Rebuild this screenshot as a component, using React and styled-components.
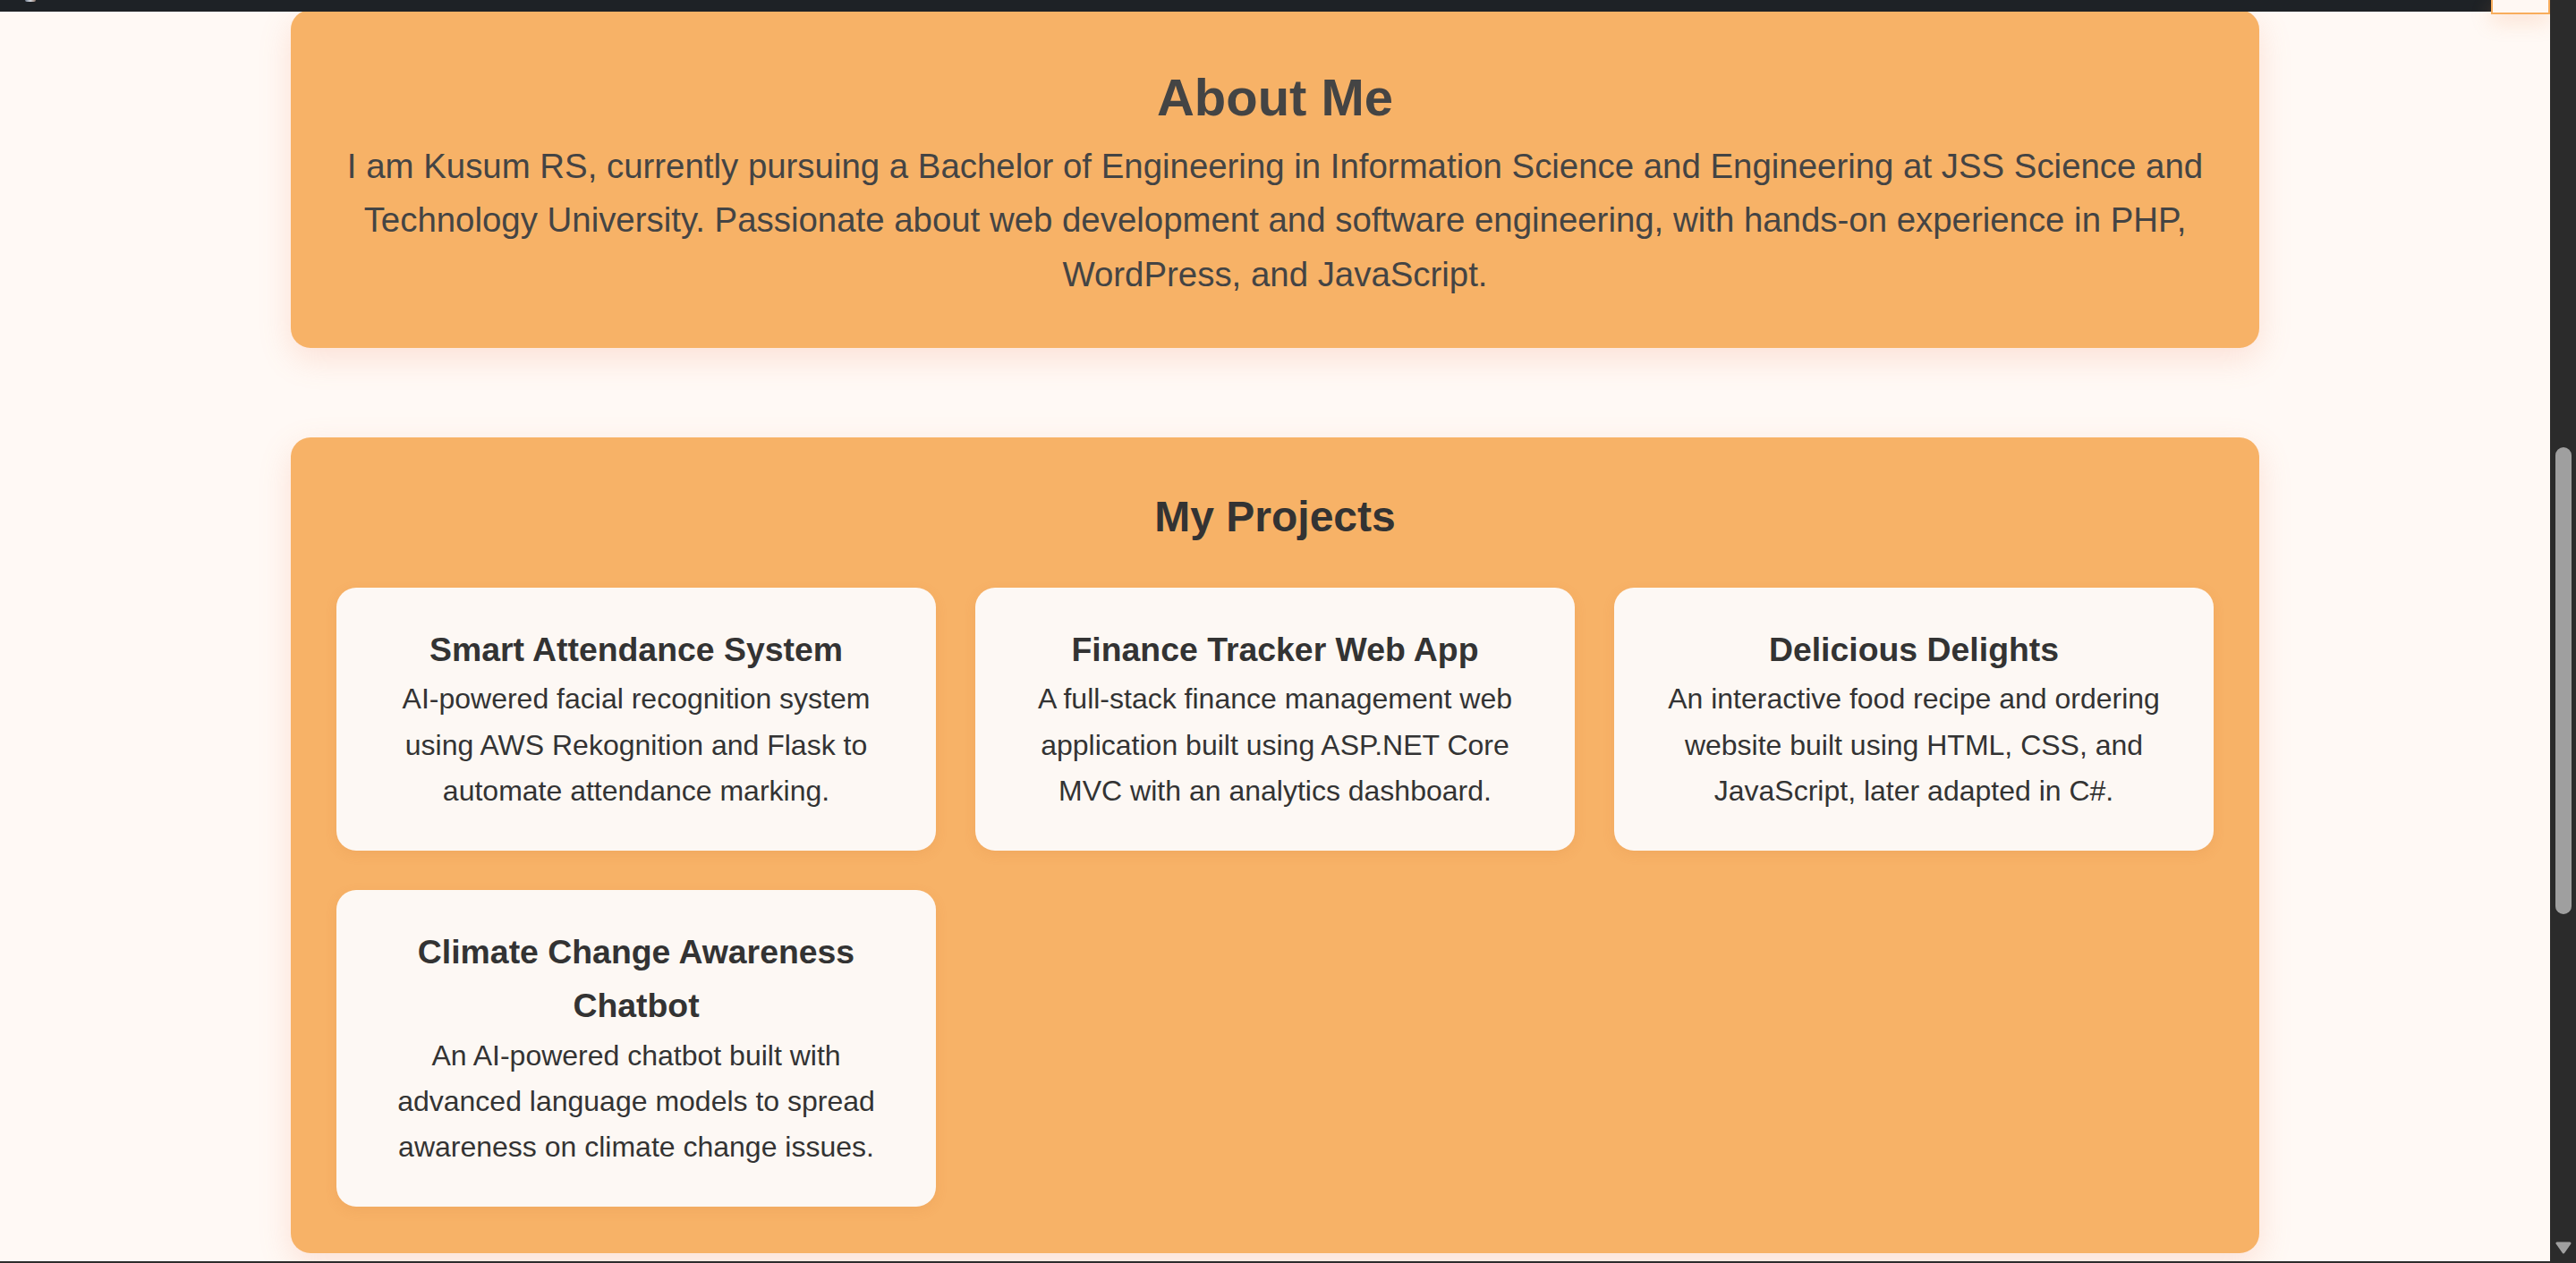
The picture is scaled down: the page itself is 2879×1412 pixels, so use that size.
import React from 'react'
import styled, { createGlobalStyle } from 'styled-components'

const GlobalStyle = createGlobalStyle`
  *, *::before, *::after {
    box-sizing: border-box;
  }
  html, body {
    margin: 0;
    padding: 0;
    overflow: hidden;
  }
  body {
    font-family: "Liberation Sans", Arial, Helvetica, sans-serif;
    background: #fff9f5;
  }
`

const Frame = styled.div`
  display: flex;
  width: 100vw;
  height: 100vh;
`

const Page = styled.main`
  position: relative;
  flex: 1;
  overflow: hidden;
  background: #fff9f5;
  border-bottom: 2px solid #2c2c2c;
`

const TopBar = styled.nav`
  position: absolute;
  top: 0;
  left: 0;
  right: 0;
  z-index: 5;
  height: 13px;
  display: flex;
  align-items: flex-start;
  padding-left: 28px;
  background: #1e2226;
`

const LogoTip = styled.span`
  width: 12px;
  height: 2px;
  border-radius: 0 0 4px 4px;
  background: linear-gradient(90deg, #6d7a8c, #d4d8de 50%, #8a6f62);
`

const MenuEdge = styled.div`
  position: absolute;
  top: 0;
  right: 0;
  z-index: 6;
  width: 66px;
  height: 16px;
  background: #fff8f3;
  border: 2px solid #f8ad5c;
  border-top: none;
  box-shadow: 0 8px 22px rgba(245, 150, 90, 0.25);
`

const Content = styled.div`
  display: flex;
  flex-direction: column;
  align-items: center;
  gap: 100px;
  padding-top: 11px;
`

const Section = styled.section`
  width: 2200px;
  background: #f7b267;
  border-radius: 22px;
  box-shadow: 0 12px 36px rgba(240, 130, 90, 0.2);
  padding: ${props => props.$top || 51}px 51px ${props => props.$bottom || 51}px;
  text-align: center;
  color: ${props => props.$ink || '#333'};
`

const AboutTitle = styled.h2`
  margin: 0;
  font-size: 58px;
  line-height: 1.6;
  font-weight: 700;
`

const AboutText = styled.p`
  margin: 0;
  font-size: 38.4px;
  line-height: 1.58;
`

const ProjectsTitle = styled.h2`
  margin: 0 0 40px;
  font-size: 48px;
  line-height: 1.6;
  font-weight: 700;
`

const ProjectGrid = styled.div`
  display: grid;
  grid-template-columns: repeat(3, 1fr);
  gap: 44px;
`

const ProjectCard = styled.article`
  background: #fdf8f4;
  border-radius: 22px;
  padding: 40px 40px 41px;
  box-shadow: 0 4px 14px rgba(200, 110, 50, 0.12);
`

const ProjectName = styled.h3`
  margin: 0;
  font-size: 37.4px;
  line-height: 1.6;
  font-weight: 700;
`

const ProjectText = styled.p`
  margin: 0;
  font-size: 32px;
  line-height: 1.6;
`

const ScrollTrack = styled.div`
  width: 29px;
  display: flex;
  flex-direction: column;
  align-items: center;
  padding: 500px 0 10px;
  background: #2b2b2b;
`

const ScrollThumb = styled.div`
  width: 18px;
  height: 522px;
  border-radius: 9px;
  background: #9f9f9f;
`

const ScrollArrow = styled.svg`
  margin-top: auto;
  display: block;
`

const projects = [
  {
    name: 'Smart Attendance System',
    text: 'AI-powered facial recognition system using AWS Rekognition and Flask to automate attendance marking.'
  },
  {
    name: 'Finance Tracker Web App',
    text: 'A full-stack finance management web application built using ASP.NET Core MVC with an analytics dashboard.'
  },
  {
    name: 'Delicious Delights',
    text: 'An interactive food recipe and ordering website built using HTML, CSS, and JavaScript, later adapted in C#.'
  },
  {
    name: 'Climate Change Awareness Chatbot',
    text: 'An AI-powered chatbot built with advanced language models to spread awareness on climate change issues.'
  }
]

const App = () => (
  <Frame>
    <GlobalStyle />
    <Page>
      <TopBar>
        <LogoTip />
      </TopBar>
      <MenuEdge />
      <Content>
        <Section $top={52} $ink="#444">
          <AboutTitle>About Me</AboutTitle>
          <AboutText>
            I am Kusum RS, currently pursuing a Bachelor of Engineering in Information Science and
            Engineering at JSS Science and Technology University. Passionate about web development and
            software engineering, with hands-on experience in PHP, WordPress, and JavaScript.
          </AboutText>
        </Section>
        <Section $bottom={52}>
          <ProjectsTitle>My Projects</ProjectsTitle>
          <ProjectGrid>
            {projects.map(p => (
              <ProjectCard key={p.name}>
                <ProjectName>{p.name}</ProjectName>
                <ProjectText>{p.text}</ProjectText>
              </ProjectCard>
            ))}
          </ProjectGrid>
        </Section>
      </Content>
    </Page>
    <ScrollTrack>
      <ScrollThumb />
      <ScrollArrow width="18" height="14" viewBox="0 0 18 14">
        <path d="M2 2 L16 2 L9 12 Z" fill="#a0a0a0" stroke="#a0a0a0" strokeWidth="3" strokeLinejoin="round" />
      </ScrollArrow>
    </ScrollTrack>
  </Frame>
)

export default App
